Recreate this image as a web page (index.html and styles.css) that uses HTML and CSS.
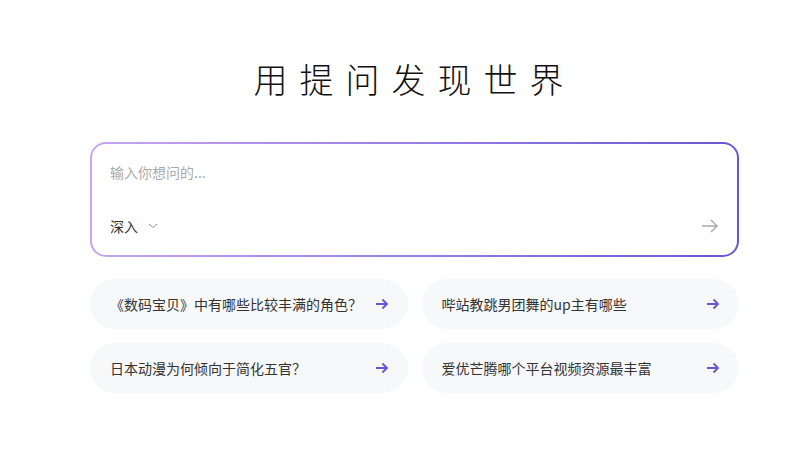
FILE: index.html
```html
<!DOCTYPE html>
<html>
<head>
    <title>用提问发现世界</title>
    <link rel="stylesheet" href="styles.css">
</head>
<body>
    <div class="main">
        <h1 class="title">用提问发现世界</h1>

        <div class="ask-box">
            <div class="placeholder">输入你想问的...</div>
            <div class="ask-footer">
                <div class="mode">
                    深入
                    <svg class="chevron" width="10" height="6" viewBox="0 0 10 6"><path d="M1 1l4 3.5L9 1" fill="none" stroke="#999" stroke-width="1"/></svg>
                </div>
                <svg class="send" width="18" height="14" viewBox="0 0 18 14"><path d="M1 7h15M10 1l6 6-6 6" fill="none" stroke="#a8a8a8" stroke-width="1.4"/></svg>
            </div>
        </div>

        <div class="suggestions">
            <div class="card">
                <span>《数码宝贝》中有哪些比较丰满的角色？</span>
                <svg class="go" width="14" height="12" viewBox="0 0 14 12"><path d="M1 6h11M7.5 1.5L12 6l-4.5 4.5" fill="none" stroke="#6b55d6" stroke-width="1.8"/></svg>
            </div>
            <div class="card">
                <span>哔站教跳男团舞的up主有哪些</span>
                <svg class="go" width="14" height="12" viewBox="0 0 14 12"><path d="M1 6h11M7.5 1.5L12 6l-4.5 4.5" fill="none" stroke="#6b55d6" stroke-width="1.8"/></svg>
            </div>
            <div class="card">
                <span>日本动漫为何倾向于简化五官？</span>
                <svg class="go" width="14" height="12" viewBox="0 0 14 12"><path d="M1 6h11M7.5 1.5L12 6l-4.5 4.5" fill="none" stroke="#6b55d6" stroke-width="1.8"/></svg>
            </div>
            <div class="card">
                <span>爱优芒腾哪个平台视频资源最丰富</span>
                <svg class="go" width="14" height="12" viewBox="0 0 14 12"><path d="M1 6h11M7.5 1.5L12 6l-4.5 4.5" fill="none" stroke="#6b55d6" stroke-width="1.8"/></svg>
            </div>
        </div>
    </div>
</body>
</html>
```

FILE: styles.css
```css
body {
    font-family: "Noto Sans CJK SC", "Noto Sans", sans-serif;
    margin: 0;
    background-color: white;
    color: #333;
}
.main {
    width: 649px;
    margin-left: 90px;
    padding-top: 52px;
}
.title {
    margin: 0 0 36px;
    text-align: center;
    font-size: 34px;
    font-weight: 300;
    line-height: 54px;
    letter-spacing: 12px;
    color: #111;
}
.ask-box {
    height: 115px;
    box-sizing: border-box;
    border: 2px solid transparent;
    border-radius: 16px;
    background: linear-gradient(white, white) padding-box,
                linear-gradient(90deg, #c7a6ef, #6a55d8) border-box;
    padding: 17px 18px 18px 18px;
    display: flex;
    flex-direction: column;
    justify-content: space-between;
}
.placeholder {
    font-size: 14px;
    color: #aaa;
    line-height: 22px;
}
.ask-footer {
    display: flex;
    justify-content: space-between;
    align-items: center;
}
.mode {
    display: flex;
    align-items: center;
    gap: 10px;
    font-size: 14px;
    color: #333;
    line-height: 22px;
}
.suggestions {
    margin-top: 22px;
    display: grid;
    grid-template-columns: 1fr 1fr;
    gap: 14px;
}
.card {
    height: 50px;
    border-radius: 25px;
    background-color: #f7f8fa;
    display: flex;
    align-items: center;
    justify-content: space-between;
    padding: 0 19px 0 20px;
    font-size: 14px;
    color: #333;
}
```
